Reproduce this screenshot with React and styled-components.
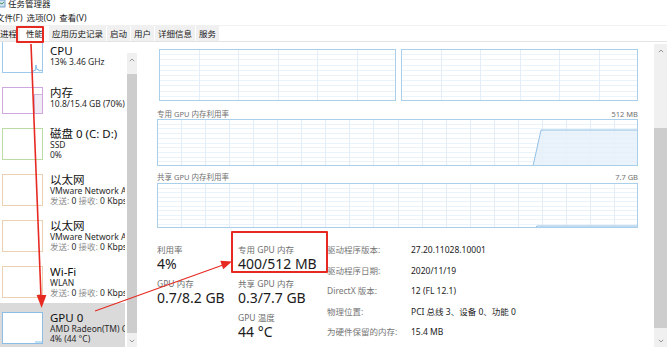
import React from 'react';
import styled, { createGlobalStyle } from 'styled-components';

const GlobalStyle = createGlobalStyle`
  html, body { margin: 0; padding: 0; background: #fff; }
  body {
    font-family: "Noto Sans", "Noto Sans CJK SC", sans-serif;
    overflow: hidden;
  }
  #root { width: 667px; height: 347px; }
`;

const RED = '#e62a22';

const Window = styled.div`
  position: relative;
  width: 667px;
  height: 347px;
  overflow: hidden;
  display: flex;
  flex-direction: column;
  background: #fff;
  color: #1a1a1a;
`;

const TitleBar = styled.div`
  height: 11px;
  display: flex;
  align-items: flex-start;
  gap: 2px;
  font-size: 8.5px;
  line-height: 8px;
  color: #222;
  overflow: hidden;
`;

const MenuBar = styled.div`
  height: 14px;
  display: flex;
  gap: 4px;
  margin-left: -4px;
  font-size: 8.5px;
  line-height: 14px;
  color: #1a1a1a;
`;

const MenuItem = styled.span`
  white-space: nowrap;
`;

const TabBar = styled.div`
  height: 15px;
  display: flex;
  gap: 1px;
  margin-left: -3px;
  border-top: 1px solid #f1f1f1;
  border-bottom: 1px solid #e4e4e4;
  font-size: 8.5px;
  line-height: 15px;
`;

const Tab = styled.div`
  padding: 0 ${p => (p.$active ? '5px' : '3px')};
  background: ${p => (p.$active ? '#fff' : '#f0f0f0')};
  color: #1a1a1a;
  white-space: nowrap;
`;

const Body = styled.div`
  flex: 1;
  min-height: 0;
  display: flex;
`;

const LeftPanel = styled.div`
  width: 138px;
  display: flex;
  flex-shrink: 0;
`;

const List = styled.div`
  width: 125px;
  margin-right: 2px;
  overflow: hidden;
`;

const ListInner = styled.div`
  margin-top: -10px;
  display: flex;
  flex-direction: column;
`;

const Item = styled.div`
  display: flex;
  gap: 7px;
  padding: 9px 0 0 2px;
  height: ${p => p.$h}px;
  box-sizing: border-box;
  background: ${p => (p.$selected ? '#dadada' : 'transparent')};
  white-space: nowrap;
`;

const Thumb = styled.div`
  width: 41px;
  height: ${p => p.$h}px;
  flex-shrink: 0;
  box-sizing: border-box;
  border: 1px solid ${p => p.$color};
  background: #fff;
  display: flex;
`;

const ItemText = styled.div`
  display: flex;
  flex-direction: column;
  margin-top: ${p => p.$shift - 1}px;
  min-width: 0;
`;

const ItemTitle = styled.div`
  font-size: 11.5px;
  line-height: 13px;
  color: #111;
`;

const ItemSub = styled.div`
  font-size: 8.5px;
  line-height: 10px;
  color: #2a2a2a;
`;

const Muted = styled.span`
  color: #8c8c8c;
`;

const ScrollBar = styled.div`
  width: ${p => p.$w}px;
  margin-top: ${p => p.$top}px;
  background: #f0f0f0;
  display: flex;
  flex-direction: column;
  flex-shrink: 0;
`;

const ScrollArrow = styled.div`
  height: 13px;
  display: flex;
  align-items: center;
  justify-content: center;
  flex-shrink: 0;
`;

const ScrollTrack = styled.div`
  flex: 1;
  display: flex;
  flex-direction: column;
  padding-top: ${p => p.$offset}px;
  padding-bottom: ${p => p.$after}px;
`;

const ScrollThumb = styled.div`
  flex: 1;
  background: #cdcdcd;
`;

const RightPanel = styled.div`
  flex: 1;
  display: flex;
  min-width: 0;
`;

const Content = styled.div`
  flex: 1;
  padding: 7px 16px 0 19px;
  display: flex;
  flex-direction: column;
  min-width: 0;
`;

const GraphRow = styled.div`
  display: flex;
  gap: 5px;
  padding-left: 2px;
`;

const GraphLabelRow = styled.div`
  display: flex;
  justify-content: space-between;
  font-size: 7.5px;
  line-height: 10px;
  color: #707070;
  margin-top: ${p => p.$mt}px;
`;

const GraphBox = styled.div`
  height: ${p => p.$h}px;
  flex: 1;
  margin-top: ${p => p.$mt || 0}px;
  display: flex;
`;

const Stats = styled.div`
  display: flex;
  margin-top: 14px;
`;

const StatCol = styled.div`
  width: ${p => p.$w}px;
  display: flex;
  flex-direction: column;
  flex-shrink: 0;
`;

const Stat = styled.div`
  display: flex;
  flex-direction: column;
  margin-bottom: 7px;
`;

const StatLabel = styled.div`
  font-size: 8.5px;
  line-height: 10px;
  color: #6d6d6d;
  white-space: nowrap;
`;

const StatValue = styled.div`
  font-size: 14px;
  line-height: 17px;
  color: #1b1b1b;
  white-space: nowrap;
`;

const InfoGrid = styled.div`
  display: grid;
  grid-template-columns: 84px auto;
  margin-top: -1px;
  font-size: 8.5px;
  line-height: 12.8px;
  white-space: nowrap;
`;

const InfoLabel = styled.div`
  color: #767676;
`;

const InfoValue = styled.div`
  color: #222;
`;

const Callout = styled.div`
  position: absolute;
  left: ${p => p.$x}px;
  top: ${p => p.$y}px;
  width: ${p => p.$w}px;
  height: ${p => p.$h}px;
  box-sizing: border-box;
  border: 2px solid ${RED};
  border-radius: 1px;
  pointer-events: none;
`;

const Overlay = styled.svg`
  position: absolute;
  left: 0;
  top: 0;
  pointer-events: none;
`;

function Chevron({ up }) {
  return (
    <svg width="6" height="4" viewBox="0 0 6 4">
      <polyline
        points={up ? '0.8,3.2 3,1 5.2,3.2' : '0.8,0.8 3,3 5.2,0.8'}
        fill="none"
        stroke="#8a8a8a"
        strokeWidth="0.9"
      />
    </svg>
  );
}

function Scroll({ w, top, offset, after }) {
  return (
    <ScrollBar $w={w} $top={top}>
      <ScrollArrow><Chevron up /></ScrollArrow>
      <ScrollTrack $offset={offset} $after={after}>
        <ScrollThumb />
      </ScrollTrack>
      <ScrollArrow><Chevron /></ScrollArrow>
    </ScrollBar>
  );
}

function Graph({ w, h, cols, rows, fill }) {
  const v = [];
  for (let i = 1; i < cols; i++) {
    const x = Math.round((w * i) / cols) + 0.5;
    v.push(<line key={'v' + i} x1={x} y1={0} x2={x} y2={h} stroke="#e3eef8" strokeWidth="1" />);
  }
  const hz = [];
  for (let j = 1; j < rows; j++) {
    const y = Math.round((h * j) / rows) + 0.5;
    hz.push(<line key={'h' + j} x1={0} y1={y} x2={w} y2={y} stroke="#eaf2fa" strokeWidth="1" />);
  }
  return (
    <svg width={w} height={h} viewBox={`0 0 ${w} ${h}`} style={{ display: 'block' }}>
      <rect x="0" y="0" width={w} height={h} fill="#fff" />
      {hz}
      {v}
      {fill && (
        <>
          <polygon points={fill} fill="#e6f0f9" fillOpacity="0.85" />
          <polyline points={fill} fill="none" stroke="#92c1e6" strokeWidth="1" />
        </>
      )}
      <rect x="0.5" y="0.5" width={w - 1} height={h - 1} fill="none" stroke="#a9cfeb" strokeWidth="1" />
    </svg>
  );
}

function ThumbChart({ kind, h }) {
  const W = 39;
  const H = h - 2;
  if (kind === 'cpu') {
    return (
      <svg width={W} height={H}>
        <polyline
          points={`30,${H} 31,${H - 2} 32,${H - 1} 33,${H - 7} 34,${H - 2} 35,${H - 3} 36,${H - 1} 38,${H - 2} 39,${H - 1}`}
          fill="none"
          stroke="#6aaee0"
          strokeWidth="0.8"
        />
      </svg>
    );
  }
  if (kind === 'mem') {
    return (
      <svg width={W} height={H}>
        <rect x="31.5" y="6.5" width="8" height={H - 6} fill="#f1ebf5" stroke="#c6a6d6" strokeWidth="0.8" />
      </svg>
    );
  }
  if (kind === 'wifi') {
    return (
      <svg width={W} height={H}>
        <polyline points={`35,${H} 36,${H - 3} 37,${H - 1} 39,${H - 1}`} fill="none" stroke="#d9a878" strokeWidth="0.8" />
      </svg>
    );
  }
  if (kind === 'gpu') {
    return (
      <svg width={W} height={H}>
        <polyline points={`32,${H - 1} 39,${H - 1}`} fill="none" stroke="#6aaee0" strokeWidth="0.8" />
      </svg>
    );
  }
  return null;
}

function TaskIcon() {
  return (
    <svg width="6" height="8" viewBox="0 0 6 8">
      <rect x="-3" y="0" width="8" height="7" fill="#cfe3f3" stroke="#5a8fbf" strokeWidth="0.8" />
      <polyline points="-2,5 0,3 2,4 4,2" fill="none" stroke="#2d7d3a" strokeWidth="0.8" />
    </svg>
  );
}

const NetLine = () => (
  <ItemSub>
    <Muted>发送: </Muted>0 <Muted>接收: </Muted>0 Kbps
  </ItemSub>
);

const sidebar = [
  { key: 'cpu', title: 'CPU', thumbH: 32, shift: 4, color: '#9fc9ec', chart: 'cpu', lines: [<ItemSub key="a">13% 3.46 GHz</ItemSub>] },
  { key: 'mem', title: '内存', thumbH: 27, color: '#cfa7df', chart: 'mem', lines: [<ItemSub key="a">10.8/15.4 GB (70%)</ItemSub>] },
  { key: 'disk', title: '磁盘 0 (C: D:)', thumbH: 32, color: '#bcdca6', lines: [<ItemSub key="a">SSD</ItemSub>, <ItemSub key="b">0%</ItemSub>] },
  { key: 'eth1', title: '以太网', thumbH: 32, color: '#ecd0b2', lines: [<ItemSub key="a">VMware Network Adapter VMnet1</ItemSub>, <NetLine key="b" />] },
  { key: 'eth2', title: '以太网', thumbH: 32, color: '#ecd0b2', lines: [<ItemSub key="a">VMware Network Adapter VMnet8</ItemSub>, <NetLine key="b" />] },
  { key: 'wifi', title: 'Wi-Fi', thumbH: 32, color: '#ecd0b2', chart: 'wifi', lines: [<ItemSub key="a">WLAN</ItemSub>, <NetLine key="b" />] },
  { key: 'gpu', title: 'GPU 0', thumbH: 32, color: '#8bbde6', chart: 'gpu', selected: true, lines: [<ItemSub key="a">AMD Radeon(TM) Graphics</ItemSub>, <ItemSub key="b">4% (44 °C)</ItemSub>] },
];

const tabs = ['进程', '性能', '应用历史记录', '启动', '用户', '详细信息', '服务'];

const info = [
  ['驱动程序版本:', '27.20.11028.10001'],
  ['驱动程序日期:', '2020/11/19'],
  ['DirectX 版本:', '12 (FL 12.1)'],
  ['物理位置:', 'PCI 总线 3、设备 0、功能 0'],
  ['为硬件保留的内存:', '15.4 MB'],
];

export default function App() {
  return (
    <>
      <GlobalStyle />
      <Window>
        <TitleBar>
          <TaskIcon />
          <span>任务管理器</span>
        </TitleBar>
        <MenuBar>
          <MenuItem>文件(F)</MenuItem>
          <MenuItem>选项(O)</MenuItem>
          <MenuItem>查看(V)</MenuItem>
        </MenuBar>
        <TabBar>
          {tabs.map(t => (
            <Tab key={t} $active={t === '性能'}>{t}</Tab>
          ))}
        </TabBar>
        <Body>
          <LeftPanel>
            <List>
              <ListInner>
                {sidebar.map(it => (
                  <Item key={it.key} $h={it.thumbH + 14} $selected={it.selected}>
                    <Thumb $h={it.thumbH} $color={it.color}>
                      <ThumbChart kind={it.chart} h={it.thumbH} />
                    </Thumb>
                    <ItemText $shift={it.shift || 0}>
                      <ItemTitle>{it.title}</ItemTitle>
                      {it.lines}
                    </ItemText>
                  </Item>
                ))}
              </ListInner>
            </List>
            <Scroll w={10} top={11} offset={8} after={1} />
          </LeftPanel>
          <RightPanel>
            <Content>
              <GraphRow>
                <GraphBox $h={52}><Graph w={237} h={52} cols={6} rows={10} /></GraphBox>
                <GraphBox $h={52}><Graph w={237} h={52} cols={6} rows={10} /></GraphBox>
              </GraphRow>
              <GraphLabelRow $mt={8}>
                <span>专用 GPU 内存利用率</span>
                <span>512 MB</span>
              </GraphLabelRow>
              <GraphBox $h={47}>
                <Graph w={481} h={47} cols={20} rows={10} fill="376,47 384,11 481,11 481,47" />
              </GraphBox>
              <GraphLabelRow $mt={4}>
                <span>共享 GPU 内存利用率</span>
                <span>7.7 GB</span>
              </GraphLabelRow>
              <GraphBox $h={45} $mt={1}>
                <Graph w={481} h={45} cols={20} rows={10} fill="378,45 380,43 481,43 481,45" />
              </GraphBox>
              <Stats>
                <StatCol $w={81}>
                  <Stat><StatLabel>利用率</StatLabel><StatValue>4%</StatValue></Stat>
                  <Stat><StatLabel>GPU 内存</StatLabel><StatValue>0.7/8.2 GB</StatValue></Stat>
                </StatCol>
                <StatCol $w={89}>
                  <Stat><StatLabel>专用 GPU 内存</StatLabel><StatValue>400/512 MB</StatValue></Stat>
                  <Stat><StatLabel>共享 GPU 内存</StatLabel><StatValue>0.3/7.7 GB</StatValue></Stat>
                  <Stat><StatLabel>GPU 温度</StatLabel><StatValue>44 °C</StatValue></Stat>
                </StatCol>
                <InfoGrid>
                  {info.map(([l, v]) => (
                    <React.Fragment key={l}>
                      <InfoLabel>{l}</InfoLabel>
                      <InfoValue>{v}</InfoValue>
                    </React.Fragment>
                  ))}
                </InfoGrid>
              </Stats>
            </Content>
            <Scroll w={13} top={2} offset={71} after={6} />
          </RightPanel>
        </Body>

        <Callout $x={16} $y={26} $w={28} $h={17} />
        <Callout $x={231} $y={231} $w={97} $h={42} />
        <Overlay width="667" height="347" viewBox="0 0 667 347">
          <line x1="31" y1="44" x2="41" y2="297" stroke={RED} strokeWidth="1.6" />
          <polygon points="41.6,308 36.6,295 46.4,295" fill={RED} />
          <line x1="95" y1="311" x2="223" y2="265" stroke={RED} strokeWidth="1.2" />
          <polygon points="232,261.5 223.2,269.2 220.3,260.8" fill={RED} />
        </Overlay>
      </Window>
    </>
  );
}
